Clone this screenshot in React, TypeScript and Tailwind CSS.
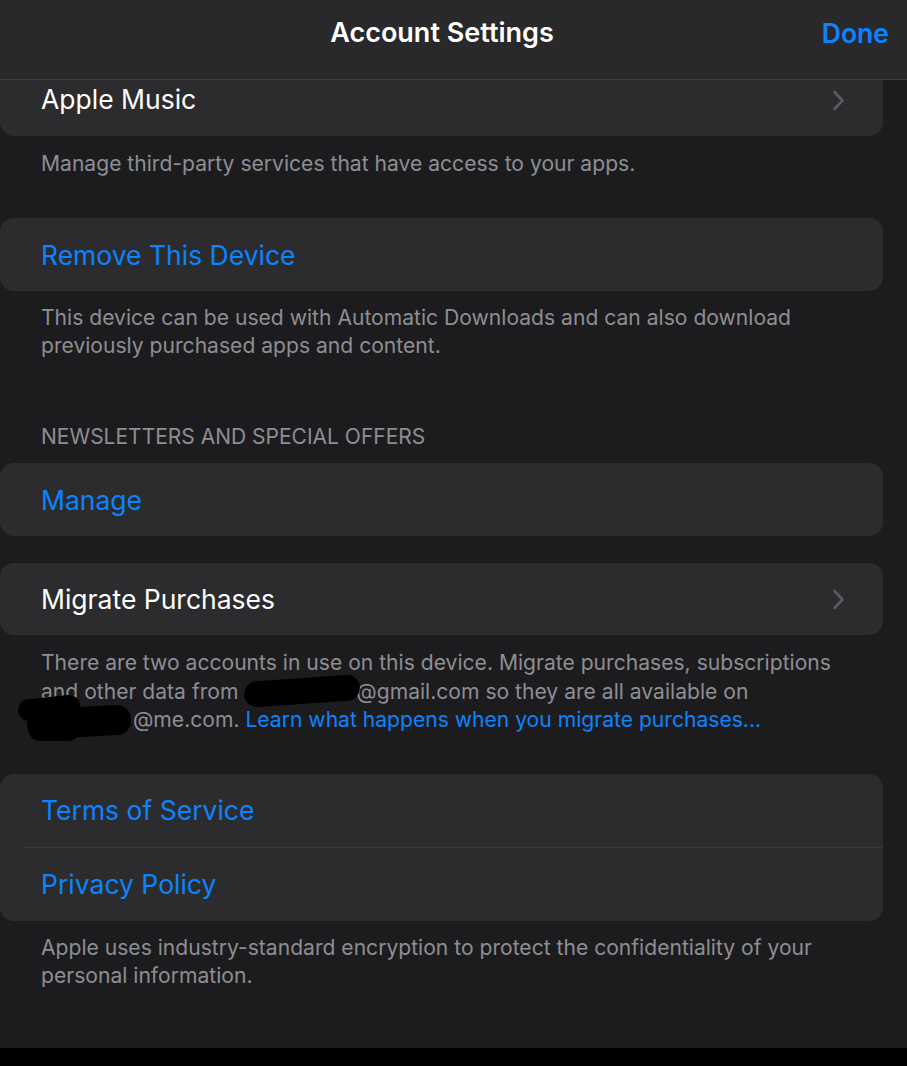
import React from "react";

const font = { fontFamily: "Inter, 'Noto Sans', sans-serif" };

function Chevron() {
  return (
    <svg width="13" height="21" viewBox="0 0 13 21" className="mr-[38px]">
      <path d="M2.5 2 L10.5 10.5 L2.5 19" fill="none" stroke="#5b5b60" strokeWidth="2.6" strokeLinecap="round" strokeLinejoin="round" />
    </svg>
  );
}

function Blob({ className }: { className: string }) {
  return <span className={"absolute bg-black " + className} />;
}

export default function App() {
  return (
    <div className="w-[907px] h-[1066px] bg-[#1c1c1e] flex flex-col overflow-hidden text-white" style={font}>
      {/* Header */}
      <div className="h-[80px] shrink-0 bg-[#29292b] border-b border-[#3d3d40] relative flex justify-center pt-[15px]">
        <div className="text-[27px] leading-[36px] font-semibold pr-[23px]">Account Settings</div>
        <div className="absolute right-[18px] top-[15px] text-[26.5px] leading-[36px] font-semibold text-[#0a84ff]">Done</div>
      </div>

      <div className="flex-1 pr-[24px]">
        {/* Apple Music (partially scrolled) */}
        <div className="h-[56px] bg-[#2c2c2e] rounded-b-[14px] flex items-start justify-between pl-[41px] pt-[2px]">
          <span className="text-[26.5px] leading-[34px]">Apple Music</span>
          <div className="mt-[8px]"><Chevron /></div>
        </div>
        <p className="pl-[41px] mt-[14px] text-[21.1px] leading-[28px] text-[#8e8e93]">
          Manage third-party services that have access to your apps.
        </p>

        {/* Remove This Device */}
        <div className="mt-[40px] h-[73px] bg-[#2c2c2e] rounded-[14px] flex items-center pl-[41px]">
          <span className="text-[26.5px] leading-[34px] text-[#0a84ff]">Remove This Device</span>
        </div>
        <p className="pl-[41px] pr-[60px] mt-[13px] text-[21.1px] leading-[28px] text-[#8e8e93]">
          This device can be used with Automatic Downloads and can also download previously purchased apps and content.
        </p>

        {/* Newsletters */}
        <div className="pl-[41px] mt-[65px] text-[21px] leading-[24px] text-[#8e8e93] uppercase">
          Newsletters and Special Offers
        </div>
        <div className="mt-[14px] h-[73px] bg-[#2c2c2e] rounded-[14px] flex items-center pl-[41px]">
          <span className="text-[26.5px] leading-[34px] text-[#0a84ff]">Manage</span>
        </div>

        {/* Migrate Purchases */}
        <div className="mt-[27px] h-[72px] bg-[#2c2c2e] rounded-[14px] flex items-center justify-between pl-[41px]">
          <span className="text-[26.5px] leading-[34px]">Migrate Purchases</span>
          <Chevron />
        </div>
        <div className="pl-[41px] pr-[20px] mt-[14px] text-[21.1px] leading-[28.5px] text-[#8e8e93] whitespace-nowrap">
          <div>There are two accounts in use on this device. Migrate purchases, subscriptions</div>
          <div>
            and other data from{" "}
            <span className="relative inline-block w-[112px] h-[20px] align-middle">
              <Blob className="left-[0px] top-[-5px] w-[116px] h-[26px] rounded-[13px] rotate-[-4deg]" />
            </span>
            @gmail.com so they are all available on
          </div>
          <div>
            <span className="relative inline-block w-[92px] h-[20px] align-middle">
              <Blob className="left-[-23px] top-[-14px] w-[62px] h-[22px] rounded-[11px] rotate-[-6deg]" />
              <Blob className="left-[-14px] top-[-4px] w-[104px] h-[30px] rounded-[14px] rotate-[-3deg]" />
              <Blob className="left-[-12px] top-[10px] w-[50px] h-[20px] rounded-[10px]" />
            </span>
            @me.com. <span className="text-[#0a84ff]">Learn what happens when you migrate purchases...</span>
          </div>
        </div>

        {/* Terms / Privacy */}
        <div className="mt-[39px] bg-[#2c2c2e] rounded-[14px] flex flex-col">
          <div className="h-[73px] flex items-center pl-[41px]">
            <span className="text-[26.5px] leading-[34px] text-[#0a84ff]">Terms of Service</span>
          </div>
          <div className="ml-[23px] h-px bg-[#3a3a3c]" />
          <div className="h-[73px] flex items-center pl-[41px]">
            <span className="text-[26.5px] leading-[34px] text-[#0a84ff]">Privacy Policy</span>
          </div>
        </div>
        <p className="pl-[41px] pr-[50px] mt-[13px] text-[21.1px] leading-[28px] text-[#8e8e93]">
          Apple uses industry-standard encryption to protect the confidentiality of your personal information.
        </p>
      </div>

      <div className="h-[18px] shrink-0 bg-black" />
    </div>
  );
}
